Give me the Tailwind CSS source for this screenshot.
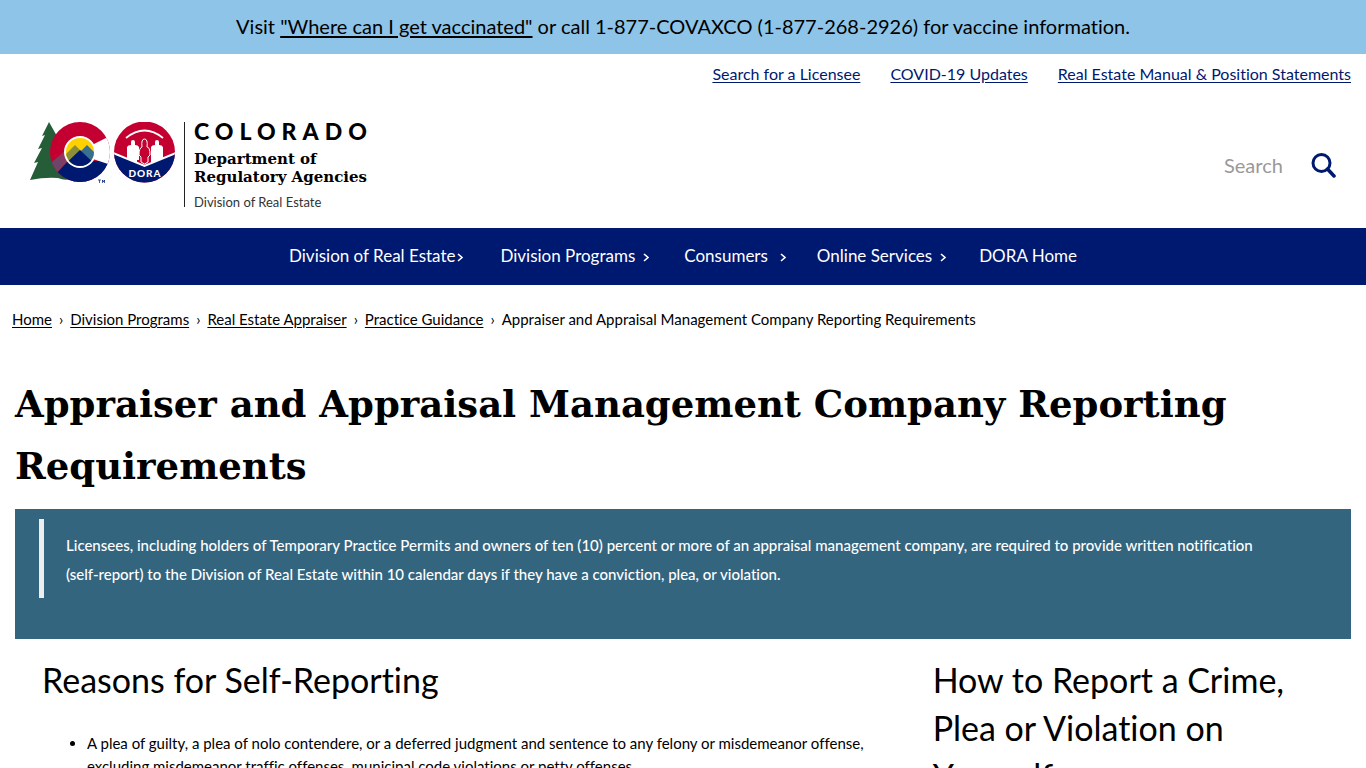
<!DOCTYPE html>
<html lang="en">
<head>
<meta charset="utf-8">
<meta name="viewport" content="width=device-width, initial-scale=1">
<title>Appraiser and Appraisal Management Company Reporting Requirements</title>
<script src="https://cdn.jsdelivr.net/npm/@tailwindcss/browser@4"></script>
</head>
<body class="bg-white text-black font-['Lato','Liberation_Sans',sans-serif] text-[15px] [font-variant-ligatures:none]">
<div class="bg-[#8ec4e7] pt-[11px] pb-[13px] text-center text-[20px] leading-[30px]">
  Visit <a href="#" class="underline underline-offset-2 decoration-2">"Where can I get vaccinated"</a> or call 1-877-COVAXCO (1-877-268-2926) for vaccine information.
</div>
<header>
  <nav aria-label="Utility" class="flex justify-end gap-[30px] px-[15px] pt-[7px] text-[16px] leading-[26px] text-[#001970]">
    <a href="#" class="underline underline-offset-2">Search for a Licensee</a>
    <a href="#" class="underline underline-offset-2">COVID-19 Updates</a>
    <a href="#" class="underline underline-offset-2">Real Estate Manual &amp; Position Statements</a>
  </nav>
  <div class="flex items-start justify-between pt-[35px] pb-[21px] pl-[30px] pr-[30px]">
    <a href="#" class="flex" aria-label="Colorado Department of Regulatory Agencies, Division of Real Estate">
      <svg width="146" height="62" viewBox="0 0 146 62">
        <defs><clipPath id="c"><circle cx="50" cy="30" r="30"/></clipPath><clipPath id="i"><circle cx="50" cy="30" r="14"/></clipPath><clipPath id="d"><circle cx="114.500" cy="30" r="30.500"/></clipPath></defs>
        <path d="M19 0l9 16-3-1 10 20 5 22q-5 2-12-1-13-1-28 2l8-18-4 1 8-15-4 1 7-14-3 1z" fill="#245d38"/>
        <g clip-path="url(#c)">
          <path d="M20 0h60v60H20z" fill="#c3002f"/>
          <path d="M19 43l17-15 12 10-20 16z" fill="#8a3a5e"/>
          <path d="M19 43l9-8 5 6-9 11z" fill="#6e4469"/>
          <path d="M24 54l14-15h44v23H24z" fill="#001970"/>
          <path d="M60 24l18-9 6-3v31l-6-1-18-6z" fill="#fff"/>
        </g>
        <circle cx="50" cy="30" r="16" fill="#fff"/>
        <g clip-path="url(#i)"><path d="M34 14h32v32H34z" fill="#ffd100"/><path d="M30 38l15-15 9 9v14H30z" fill="#8c8f3a"/><path d="M57 23l12 12v11H50V30z" fill="#396f8f"/><path d="M50 28l18 17v3H32v-3z" fill="#001970"/></g>
        <path d="M68 58h3m-1.500 0v3m3 0v-3l1 2 1-2v3" fill="none" stroke="#001970" stroke-width=".7"/>
        <g clip-path="url(#d)"><path d="M83 0h63v61H83z" fill="#c3002f"/><path d="M83 31l31.500 13L146 31v30H83z" fill="#001970"/><path d="M83 31l31.500 13L146 31" fill="none" stroke="#fff" stroke-width="2"/></g>
        <path d="M96 16q18.500-15 37 0" fill="none" stroke="#fff" stroke-width="1.800"/>
        <g fill="#fff"><path d="M97 36V25q1-2 4-2v-3q0-2 2-2t2 2v3q3 0 4 2v13h-2v3zM121 38V25q1-2 4-2v-3q0-2 2-2t2 2v3q3 0 4 2v11l-10 5h-2z"/></g>
        <path d="M112 25q-1-8 2.500-8t2.500 8q3 0 3 8l-2 2v5l-3.500 2-3.500-2v-5l-2-2q0-7 3-8z" fill="#c3002f" stroke="#fff"/>
        <text x="115" y="55" text-anchor="middle" fill="#fff" font-family="Lato, sans-serif" font-weight="900" font-size="10" letter-spacing="1">DORA</text>
      </svg>
      <div class="ml-2 border-l border-[#222] pl-[9px] h-[85px]">
        <div class="text-[23px] leading-[18px] font-black tracking-[6px]">COLORADO</div>
        <div class="mt-[10px] text-[15px] leading-[18px] font-bold font-['DejaVu_Serif',serif]">Department of<br>Regulatory Agencies</div>
        <div class="mt-[7px] text-[13px] leading-[18px] font-normal text-[#333]">Division of Real Estate</div>
      </div>
    </a>
    <form class="flex items-center pt-[28px]">
      <input type="search" aria-label="Search" placeholder="Search" class="w-[87px] text-[20px] leading-[30px] outline-none placeholder:text-[#999]">
      <button type="button" aria-label="Submit search"><svg width="25" height="25" viewBox="0 0 25 25" fill="none" stroke="#001970"><circle cx="10.500" cy="10" r="8.500" stroke-width="3"/><path d="M16.500 16l6.500 7" stroke-width="3.500" stroke-linecap="round"/></svg></button>
    </form>
  </div>
</header>
<nav aria-label="Main" class="flex justify-center bg-[#001970] text-white text-[17px] leading-[55px] pb-[2px]">
  <a href="#" class="flex items-center gap-[2px] mr-[36px]">Division of Real Estate <svg width="7" height="9" viewBox="0 0 7 9" fill="none" stroke="currentColor" stroke-width="1.600" class="mt-1"><path d="M1 1l4 3.500L1 8"/></svg></a>
  <a href="#" class="flex items-center gap-2 mr-[34px]">Division Programs <svg width="7" height="9" viewBox="0 0 7 9" fill="none" stroke="currentColor" stroke-width="1.600" class="mt-1"><path d="M1 1l4 3.500L1 8"/></svg></a>
  <a href="#" class="flex items-center gap-3 mr-[30px]">Consumers <svg width="7" height="9" viewBox="0 0 7 9" fill="none" stroke="currentColor" stroke-width="1.600" class="mt-1"><path d="M1 1l4 3.500L1 8"/></svg></a>
  <a href="#" class="flex items-center gap-2 mr-[32px]">Online Services <svg width="7" height="9" viewBox="0 0 7 9" fill="none" stroke="currentColor" stroke-width="1.600" class="mt-1"><path d="M1 1l4 3.500L1 8"/></svg></a>
  <a href="#">DORA Home</a>
</nav>
<main>
  <nav aria-label="Breadcrumb" class="flex gap-[7px] px-3 pt-[22px] text-[15px] leading-[24px]">
    <a href="#" class="underline underline-offset-2">Home</a><span>›</span>
    <a href="#" class="underline underline-offset-2">Division Programs</a><span>›</span>
    <a href="#" class="underline underline-offset-2">Real Estate Appraiser</a><span>›</span>
    <a href="#" class="underline underline-offset-2">Practice Guidance</a><span>›</span>
    <span>Appraiser and Appraisal Management Company Reporting Requirements</span>
  </nav>
  <div class="px-[15px] pt-[42px]">
    <h1 class="text-[37px] leading-[62px] font-bold font-['DejaVu_Serif',serif]">Appraiser and Appraisal Management Company Reporting Requirements</h1>
    <div class="mt-3 bg-[#34657f] pt-[10px] pb-[41px] px-6 text-white">
      <blockquote class="border-l-[5px] border-[#eee] pl-[22px] pr-8 pt-[12px] pb-[9px] text-[15px] leading-[29px] font-medium">Licensees, including holders of Temporary Practice Permits and owners of ten (10) percent or more of an appraisal management company, are required to provide written notification <span class="whitespace-nowrap">(self-report)</span> to the Division of Real Estate within 10 calendar days if they have a conviction, plea, or violation.</blockquote>
    </div>
    <div class="grid grid-cols-[2fr_1fr] pt-[17px]">
      <section class="pl-[27px] pr-2">
        <h2 class="text-[34px] leading-[48px]">Reasons for Self-Reporting</h2>
        <ul class="mt-[28px] pl-[45px] list-disc text-[15px] leading-[23px]">
          <li>A plea of guilty, a plea of nolo contendere, or a deferred judgment and sentence to any felony or misdemeanor offense, excluding misdemeanor traffic offenses, municipal code violations or petty offenses.</li>
        </ul>
      </section>
      <section class="pl-[27px] pr-6">
        <h2 class="text-[34px] leading-[48px]">How to Report a Crime, Plea or Violation on Yourself</h2>
      </section>
    </div>
  </div>
</main>
</body>
</html>
